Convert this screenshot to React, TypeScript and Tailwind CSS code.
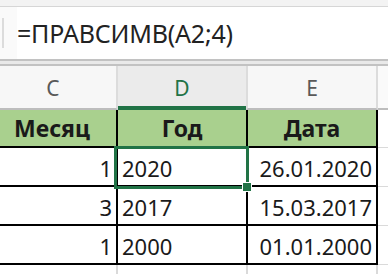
import React from 'react';

const font = { fontFamily: '"Noto Sans", "Open Sans", sans-serif' };

const rows = [
  { m: '1', y: '2020', d: '26.01.2020' },
  { m: '3', y: '2017', d: '15.03.2017' },
  { m: '1', y: '2000', d: '01.01.2000' },
];

const App: React.FC = () => {
  return (
    <div className="relative w-[388px] h-[274px] overflow-hidden bg-white text-[#1a1a1a]" style={font}>
      {/* toolbar edge */}
      <div className="h-[7px] bg-[#f3f3f3] border-b border-[#d6d6d6]" />

      {/* formula bar */}
      <div className="flex h-[52px]">
        <div className="w-[17px] bg-[#fafafa] flex items-center">
          <div className="ml-[2px] w-[2px] h-[30px] bg-[#dcdcdc]" />
        </div>
        <div className="flex-1 flex items-center text-[25px] leading-none text-[#222] tracking-[-0.2px] pt-[1px]">
          =ПРАВСИМВ(A2;4)
        </div>
      </div>

      {/* double divider */}
      <div className="h-[7px] border-y-2 border-[#c2c2c2] bg-[#e9e9e9]" />

      {/* column letters */}
      <div className="flex h-[44px] text-[21px] leading-none">
        <div className="w-[118px] shrink-0 bg-[#f7f7f7] border-r-2 border-r-[#dcdcdc] border-b-2 border-b-[#bdbdbd] flex items-center justify-center pt-[2px] text-[#595959]">
          <span className="ml-[-10px]">C</span>
        </div>
        <div className="w-[128px] shrink-0 bg-[#ebebeb] border-b-4 border-b-[#217346] flex items-center justify-center pt-[4px] text-[#217346]">
          D
        </div>
        <div className="w-[132px] shrink-0 bg-[#f7f7f7] border-x-2 border-x-[#dcdcdc] border-b-2 border-b-[#bdbdbd] flex items-center justify-center pt-[2px] text-[#595959]">
          E
        </div>
        <div className="flex-1 bg-[#fafafa] border-b-2 border-b-[#bdbdbd]" />
      </div>

      {/* header row */}
      <div className="flex h-[38px] text-[23px] font-bold leading-none">
        <div className="w-[118px] shrink-0 bg-[#a9d08e] border-r-2 border-b-2 border-black flex items-end justify-center pb-[6px]">
          <span className="ml-[-12px]">Месяц</span>
        </div>
        <div className="w-[130px] shrink-0 bg-[#a9d08e] border-r-2 border-b-2 border-black flex items-end justify-center pb-[6px]">
          Год
        </div>
        <div className="w-[130px] shrink-0 bg-[#a9d08e] border-r-2 border-b-2 border-black flex items-end justify-center pb-[6px]">
          Дата
        </div>
        <div className="flex-1 border-b border-[#dadada]" />
      </div>

      {/* data rows */}
      {rows.map((r, i) => (
        <div key={i} className="flex h-[39px] text-[22px] leading-none">
          <div className="w-[118px] shrink-0 border-r-2 border-b-2 border-black flex items-end justify-end pr-[4px] pb-[6px]">
            {r.m}
          </div>
          <div className="w-[130px] shrink-0 border-r-2 border-b-2 border-black flex items-end pl-[4px] pb-[6px]">
            {r.y}
          </div>
          <div className="w-[130px] shrink-0 border-r-2 border-b-2 border-black flex items-end justify-end pr-[4px] pb-[6px]">
            {r.d}
          </div>
          <div className="flex-1 border-b border-[#dadada]" />
        </div>
      ))}

      {/* empty row below */}
      <div className="flex h-[20px]">
        <div className="w-[118px] shrink-0 border-r-2 border-[#dadada]" />
        <div className="w-[130px] shrink-0 border-r-2 border-[#dadada]" />
        <div className="w-[130px] shrink-0 border-r-2 border-[#dadada]" />
      </div>

      {/* selection D2 */}
      <div className="absolute left-[114px] top-[146px] w-[135px] h-[43px] border-[3px] border-[#217346]" />
      <div className="absolute left-[242px] top-[182px] w-[10px] h-[10px] bg-[#217346] border border-white" />
    </div>
  );
};

export default App;
